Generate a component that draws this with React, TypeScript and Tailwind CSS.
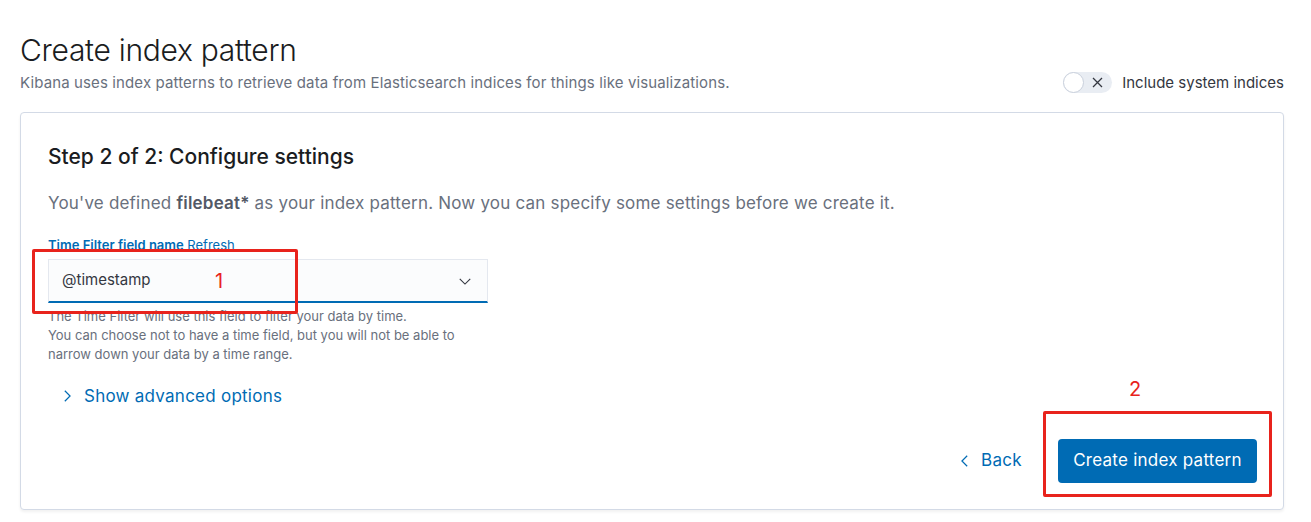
import { useState } from "react";

const font = { fontFamily: "Inter, 'Noto Sans', sans-serif" };

const ChevronDown = () => (
  <svg width="14" height="14" viewBox="0 0 16 16" fill="none" stroke="#343741" strokeWidth="1.3">
    <path d="M2 5.5l6 6 6-6" />
  </svg>
);

const ChevronRight = ({ color = "#006bb4" }: { color?: string }) => (
  <svg width="10" height="14" viewBox="0 0 10 16" fill="none" stroke={color} strokeWidth="1.4">
    <path d="M2.5 2l6 6-6 6" />
  </svg>
);

const ChevronLeft = ({ color = "#006bb4" }: { color?: string }) => (
  <svg width="10" height="14" viewBox="0 0 10 16" fill="none" stroke={color} strokeWidth="1.4">
    <path d="M7.5 2l-6 6 6 6" />
  </svg>
);

export default function App() {
  const [system, setSystem] = useState(false);

  return (
    <div className="min-h-[522px] bg-white pl-[20px] pr-[27px] pt-[30px] text-[#343741]" style={font}>
      <div className="flex items-end justify-between">
        <div>
          <h1 className="text-[30px] font-light leading-[40px] text-[#1a1c21] tracking-[-0.3px]">Create index pattern</h1>
          <p className="mt-[1px] text-[15px] leading-[24px] text-[#69707d] tracking-[0.12px]">
            Kibana uses index patterns to retrieve data from Elasticsearch indices for things like visualizations.
          </p>
        </div>
        <div className="flex items-center gap-[10px] pb-[1px]">
          <button
            onClick={() => setSystem(!system)}
            className="relative flex h-[21px] w-[49px] items-center rounded-full bg-[#e9edf3]"
          >
            <span className="absolute left-0 top-0 h-[21px] w-[21px] rounded-full border border-[#c9d0dc] bg-white" />
            <svg className="absolute left-[29px] top-[5px]" width="11" height="11" viewBox="0 0 11 11" stroke="#343741" strokeWidth="1.3">
              <path d="M1 1l9 9M10 1l-9 9" />
            </svg>
          </button>
          <span className="text-[15px] text-[#343741]">Include system indices</span>
        </div>
      </div>

      <div className="relative mt-[17px] rounded-[4px] border border-[#d3dae6] bg-white pb-[26px] pl-[27px] pr-[26px] pt-[30px] shadow-[0_2px_3px_rgba(0,0,0,0.06)]">
        <h2 className="text-[21px] font-medium leading-[28px] text-[#1a1c21]">Step 2 of 2: Configure settings</h2>
        <p className="mt-[20px] text-[17px] leading-[24px] text-[#69707d] tracking-[0.2px]">
          You've defined <span className="font-semibold text-[#535966]">filebeat*</span> as your index pattern. Now you can specify some settings before we create it.
        </p>

        <div className="mt-[23px] w-[440px]">
          <div className="text-[13px] leading-[14px] text-[#006bb4]">
            <span className="font-semibold">Time Filter field name</span> <span>Refresh</span>
          </div>
          <div className="mt-[7px] flex h-[44px] items-center justify-between border border-b-2 border-[#e4e8ef] border-b-[#006bb4] bg-[#fbfcfd] pl-[13px] pr-[15px]">
            <span className="text-[15px] text-[#343741]">@timestamp</span>
            <ChevronDown />
          </div>
          <div className="mt-[4px] text-[13px] leading-[19px] text-[#69707d]">
            The Time Filter will use this field to filter your data by time.
            <br />
            You can choose not to have a time field, but you will not be able to narrow down your data by a time range.
          </div>
        </div>

        <div className="mt-[20px] flex items-center gap-[12px] pl-[14px] text-[17px] leading-[24px] tracking-[0.25px] text-[#006bb4]">
          <ChevronRight />
          <span>Show advanced options</span>
        </div>

        <div className="mt-[31px] flex items-center justify-end gap-[36px]">
          <div className="flex items-center gap-[11px] text-[17px] tracking-[0.3px] text-[#006bb4]">
            <ChevronLeft />
            <span>Back</span>
          </div>
          <button className="h-[44px] w-[199px] rounded-[4px] bg-[#006bb4] text-[17px] tracking-[0.25px] text-white">
            Create index pattern
          </button>
        </div>

        <div className="pointer-events-none absolute left-[11px] top-[136px] h-[65px] w-[266px] rounded-[2px] border-[3px] border-[#e8231c]" />
        <div className="pointer-events-none absolute left-[194px] top-[156px] text-[20px] leading-[24px] text-[#e8231c]">1</div>
        <div className="pointer-events-none absolute left-[1022px] top-[298px] h-[86px] w-[229px] rounded-[2px] border-[3px] border-[#e8231c]" />
        <div className="pointer-events-none absolute left-[1108px] top-[264px] text-[20px] leading-[24px] text-[#e8231c]">2</div>
      </div>
    </div>
  );
}
